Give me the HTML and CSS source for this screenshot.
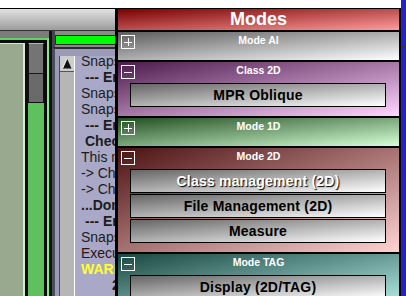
FILE: index.html
```html
<!DOCTYPE html>
<html lang="en">
<head>
    <meta charset="UTF-8">
    <title>Modes</title>
    <link rel="stylesheet" href="styles.css">
</head>
<body>
    <div class="app">
        <div class="screen">
            <div class="topgap"></div>
            <div class="toolbar"></div>
            <div class="work">
                <div class="left">
                    <div class="gframe">
                        <div class="tree"></div>
                        <div class="vscroll">
                            <div class="thumb"><div class="grip"></div></div>
                            <div class="track"></div>
                        </div>
                    </div>
                </div>
                <div class="right">
                    <div class="prog-row"><div class="prog"></div></div>
                    <div class="log">
                        <div class="lscroll">
                            <div class="up">
                                <svg width="10" height="11" viewBox="0 0 10 11"><path d="M5 0.5L9.5 10.5H0.5Z" fill="#111"/><path d="M5 0.5L0.5 10.5" stroke="#fff" stroke-width="1"/></svg>
                            </div>
                        </div>
                        <div class="text">
                            <div class="lines">
                                <p>Snapshot saved</p>
                                <p class="b in">--- Errors ---</p>
                                <p>Snapshot started</p>
                                <p>Snapshot saved</p>
                                <p class="b in">--- Errors ---</p>
                                <p class="b in">Checking classes</p>
                                <p>This may take a while</p>
                                <p>-&gt; Checking classes</p>
                                <p>-&gt; Checking files</p>
                                <p class="b">...Done</p>
                                <p class="b in">--- Errors ---</p>
                                <p>Snapshot saved</p>
                                <p class="exec">Execution finished</p>
                                <p class="warn">WARNING</p>
                                <p class="b cnt">2 warnings</p>
                            </div>
                        </div>
                    </div>
                </div>
            </div>
        </div>
        <div class="edge"><span class="mark"></span></div>
    </div>

    <div class="modes">
        <div class="modes-title">Modes</div>

        <div class="sec ai">
            <div class="sec-head">
                <svg class="tog" width="14" height="14" viewBox="0 0 14 14"><rect x="0.5" y="0.5" width="13" height="13" fill="none" stroke="#fff"/><path d="M3 7.5h8M7.5 3v8" stroke="#fff"/></svg>
                <span class="sec-title">Mode AI</span>
            </div>
        </div>

        <div class="sec open c2d">
            <div class="sec-head">
                <svg class="tog" width="14" height="14" viewBox="0 0 14 14"><rect x="0.5" y="0.5" width="13" height="13" fill="none" stroke="#fff"/><path d="M3 7.5h8" stroke="#fff"/></svg>
                <span class="sec-title">Class 2D</span>
            </div>
            <div class="btn">MPR Oblique</div>
        </div>

        <div class="sec m1d">
            <div class="sec-head">
                <svg class="tog" width="14" height="14" viewBox="0 0 14 14"><rect x="0.5" y="0.5" width="13" height="13" fill="none" stroke="#fff"/><path d="M3 7.5h8M7.5 3v8" stroke="#fff"/></svg>
                <span class="sec-title">Mode 1D</span>
            </div>
        </div>

        <div class="sec open m2d">
            <div class="sec-head">
                <svg class="tog" width="14" height="14" viewBox="0 0 14 14"><rect x="0.5" y="0.5" width="13" height="13" fill="none" stroke="#fff"/><path d="M3 7.5h8" stroke="#fff"/></svg>
                <span class="sec-title">Mode 2D</span>
            </div>
            <div class="btn hot">Class management (2D)</div>
            <div class="btn">File Management (2D)</div>
            <div class="btn">Measure</div>
        </div>

        <div class="sec open tag">
            <div class="sec-head">
                <svg class="tog" width="14" height="14" viewBox="0 0 14 14"><rect x="0.5" y="0.5" width="13" height="13" fill="none" stroke="#fff"/><path d="M3 7.5h8" stroke="#fff"/></svg>
                <span class="sec-title">Mode TAG</span>
            </div>
            <div class="btn">Display (2D/TAG)</div>
        </div>
    </div>
</body>
</html>
```

FILE: styles.css
```css
* {
    box-sizing: border-box;
    margin: 0;
    padding: 0;
}
body {
    width: 406px;
    height: 296px;
    overflow: hidden;
    position: relative;
    background: #fff;
    font-family: "Liberation Sans", Arial, sans-serif;
}
.app {
    display: flex;
    height: 296px;
}
.screen {
    width: 401px;
    display: flex;
    flex-direction: column;
}
.topgap {
    height: 8px;
    background: #fff;
}
.toolbar {
    height: 23px;
    border-top: 1px solid #000;
    border-bottom: 1px solid #333;
    background: linear-gradient(#e2e2e2, #9c9c9c);
}
.work {
    flex: 1;
    display: flex;
    min-height: 0;
}

/* left tree pane */
.left {
    width: 52px;
    display: flex;
    padding-top: 7px;
    background: #7c7c7c;
    border-right: 3px solid #111;
}
.gframe {
    flex: 1;
    display: flex;
    gap: 3px;
    padding: 3px 3px 0 0;
    background: #0c0c0c;
    border-top: 2px solid #5fd35f;
    border-right: 2px solid #8ce88c;
}
.tree {
    width: 25px;
    background: #98a98f;
    border-top: 1px solid #d6ead2;
    border-right: 2px solid #d6ead2;
}
.vscroll {
    width: 16px;
    display: flex;
    flex-direction: column;
}
.thumb {
    height: 60px;
    background: #6a6a6a;
    border: 1px solid #111;
    border-top-color: #b4b4b4;
}
.grip {
    height: 30px;
    background: #747474;
    border-bottom: 1px solid #1a1a1a;
}
.track {
    flex: 1;
    background: #5ec15e;
}

/* right log pane */
.right {
    flex: 1;
    min-width: 0;
    display: flex;
    flex-direction: column;
}
.prog-row {
    height: 16px;
    padding-top: 4px;
    background: #8a8a8a;
    border-left: 3px solid #45454f;
}
.prog {
    height: 10px;
    border: 1px solid #2c2c2c;
    background: #00ff00;
}
.log {
    flex: 1;
    min-height: 0;
    display: flex;
    padding: 7px 0 0 4px;
    background: #9b9bb7;
    border-top: 2px solid #2c2c36;
    border-left: 3px solid #4c4c5c;
}
.lscroll {
    width: 16px;
    background: #b6b6b6;
    border-left: 1px solid #4a4a4a;
    border-right: 1px solid #fff;
}
.lscroll .up {
    height: 16px;
    display: flex;
    align-items: center;
    justify-content: center;
    background: #cdcdcd;
    border-bottom: 1px solid #555;
}
.text {
    flex: 1;
    overflow: hidden;
    padding-left: 6px;
    background: #a9a9c7;
    color: #1c1c1c;
    font-size: 14px;
    line-height: 16px;
}
.lines {
    margin-top: -3px;
    white-space: nowrap;
}
.b {
    font-weight: bold;
}
.in {
    padding-left: 4px;
}
.exec {
    color: #2a1414;
}
.warn {
    color: #ffff2a;
    font-weight: bold;
}
.cnt {
    padding-left: 31px;
}
.edge {
    width: 5px;
    background: #2323c9;
}
.edge .mark {
    display: block;
    margin-top: 46px;
    height: 1px;
    background: #333;
}

/* floating modes window */
.modes {
    position: absolute;
    left: 115px;
    top: 8px;
    width: 286px;
    height: 288px;
    overflow: hidden;
    display: flex;
    flex-direction: column;
    gap: 2px;
    padding: 1px 2px 0 3px;
    background: #000;
}
.modes-title {
    flex: none;
    height: 21px;
    line-height: 21px;
    text-align: center;
    color: #fff;
    font-size: 18px;
    font-weight: bold;
    background: linear-gradient(to bottom right, #780000, #ff9c9c);
}
.sec {
    flex: none;
    padding: 3px 0 7px;
}
.sec.open {
    padding-bottom: 8px;
}
.sec-head {
    display: grid;
    grid-template-columns: 1fr auto 1fr;
    align-items: start;
    height: 18px;
}
.tog {
    display: block;
    margin-left: 3px;
}
.sec-title {
    color: #fff;
    font-size: 10.5px;
    font-weight: bold;
    line-height: 11px;
}
.ai {
    background: linear-gradient(to bottom right, #5c5c5c, #fff);
}
.c2d {
    background: linear-gradient(to bottom right, #4c1a4c, #ffd6ff);
}
.m1d {
    background: linear-gradient(to bottom right, #224f22, #d6ffd6);
}
.m2d {
    background: linear-gradient(to bottom right, #4c1212, #ffd2d2);
}
.tag {
    background: linear-gradient(to bottom right, #1a4742, #b8f0ea);
}
.btn {
    height: 24px;
    margin: 0 13px 1px 12px;
    border: 1px solid #000;
    background: linear-gradient(to bottom right, #656565, #fff);
    color: #000;
    font-size: 14px;
    font-weight: bold;
    line-height: 22px;
    text-align: center;
    letter-spacing: 0.2px;
}
.btn.hot {
    color: #fff;
    text-shadow: 1px 1px 1px #000;
}
```
